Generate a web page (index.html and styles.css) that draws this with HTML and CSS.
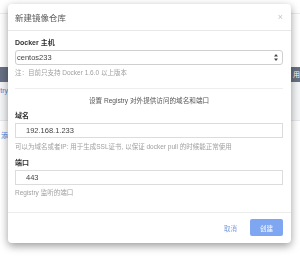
FILE: index.html
```html
<!DOCTYPE html>
<html lang="zh-CN">

<head>
  <meta charset="utf-8">
  <title>新建镜像仓库</title>
  <link rel="stylesheet" href="styles.css">
</head>

<body>
  <div class="page">
    <div class="topbar"></div>
    <div class="table">
      <div class="thead">
        <div class="cell cell-first"></div>
        <div class="cell cell-last">用</div>
      </div>
      <div class="trow">
        <div class="cell cell-first"><a class="link">try</a></div>
      </div>
    </div>
    <div class="actions">
      <div class="cell cell-first"><a class="link">添</a></div>
    </div>
  </div>

  <div class="modal-backdrop">
    <div class="modal">
      <div class="modal-header">
        <h4 class="modal-title">新建镜像仓库</h4>
        <span class="close">×</span>
      </div>
      <div class="modal-body">
        <label class="form-label">Docker 主机</label>
        <div class="select">
          <span>centos233</span>
          <svg class="select-arrows" width="4" height="7" viewBox="0 0 4 7">
            <path d="M2 0 L4 2.6 L0 2.6 Z M2 7 L4 4.4 L0 4.4 Z" fill="#444" />
          </svg>
        </div>
        <p class="help help-first">注：目前只支持 Docker 1.6.0 以上版本</p>
        <hr class="divider">
        <p class="section-note">设置 Registry 对外提供访问的域名和端口</p>
        <label class="form-label form-label-top">域名</label>
        <div class="input">192.168.1.233</div>
        <p class="help help-wide">可以为域名或者IP: 用于生成SSL证书, 以保证 docker pull 的时候能正常使用</p>
        <label class="form-label form-label-gap">端口</label>
        <div class="input">443</div>
        <p class="help help-first">Registry 监听的端口</p>
      </div>
      <div class="modal-footer">
        <a class="btn-link">取消</a>
        <span class="btn-primary">创建</span>
      </div>
    </div>
  </div>
</body>

</html>
```

FILE: styles.css
```css
html,
body {
  margin: 0;
  padding: 0;
  background: #fff;
  font-family: "Liberation Sans", "Noto Sans CJK SC", sans-serif;
}

/* page behind the dialog */
.page {
  width: 300px;
  height: 257px;
  overflow: hidden;
}

.topbar {
  height: 13px;
  border-bottom: 1px solid #ececec;
}

.table {
  margin-top: 53px;
}

.thead {
  height: 15px;
  background: #687084;
  display: flex;
  justify-content: space-between;
  color: #fff;
  font-size: 7px;
  line-height: 15px;
}

.trow {
  height: 38px;
  background: #f4f5f7;
  border-bottom: 1px solid #e6e8ec;
  font-size: 7px;
  line-height: 18px;
}

.cell {
  display: flex;
  white-space: nowrap;
}

.cell-first {
  width: 8px;
  justify-content: flex-end;
}

.cell-last {
  width: 7px;
}

.link {
  color: #4a7fd8;
}

.actions {
  margin-top: 10px;
  font-size: 7px;
  line-height: 10px;
}

/* dialog */
.modal-backdrop {
  position: fixed;
  left: 0;
  top: 0;
  right: 0;
  bottom: 0;
  padding: 4px 0 0 8px;
}

.modal {
  width: 283px;
  background: #fff;
  border-radius: 4px;
  box-shadow: 0 3px 9px rgba(0, 0, 0, 0.4);
}

.modal-header {
  height: 26px;
  padding: 0 8px 0 7px;
  display: flex;
  align-items: center;
  justify-content: space-between;
  border-bottom: 1px solid #e8e8e8;
}

.modal-title {
  margin: 0;
  font-size: 8.5px;
  font-weight: normal;
  color: #555;
}

.close {
  font-size: 9px;
  color: #c4c4c4;
  line-height: 10px;
}

.modal-body {
  padding: 7px 8px 15px 7px;
}

.form-label {
  display: block;
  font-size: 7px;
  line-height: 10px;
  font-weight: bold;
  color: #333;
  margin-bottom: 2px;
}

.form-label-top {
  margin-top: 5px;
}

.form-label-gap {
  margin-top: 7px;
}

.select,
.input {
  box-sizing: border-box;
  height: 15px;
  border: 1px solid #d4d4d4;
  border-radius: 2px;
  font-size: 7.5px;
  color: #444;
  display: flex;
  align-items: center;
}

.select {
  justify-content: space-between;
  padding: 0 4px 0 1px;
  border-color: #cfcfcf;
  border-radius: 3px;
}

.input {
  padding-left: 10px;
  border-color: #dcdcdc;
  border-radius: 0;
}

.help {
  margin: 3px 0 0;
  font-size: 6.5px;
  line-height: 9px;
  color: #a0a0a0;
}

.help-wide {
  margin-top: 4px;
}

.divider {
  margin: 11px 0 0;
  border: 0;
  border-top: 1px solid #eee;
}

.section-note {
  margin: 7px 0 0;
  text-align: center;
  font-size: 6.6px;
  line-height: 10px;
  color: #555;
}

.modal-footer {
  border-top: 1px solid #ececec;
  padding: 6px 8px 7px;
  display: flex;
  justify-content: flex-end;
  align-items: center;
  gap: 13px;
}

.btn-link {
  font-size: 6.5px;
  color: #7f9edc;
}

.btn-primary {
  width: 33px;
  height: 17px;
  border-radius: 2px;
  background: #7fa7f1;
  color: #fff;
  font-size: 6.5px;
  display: flex;
  align-items: center;
  justify-content: center;
}
```
